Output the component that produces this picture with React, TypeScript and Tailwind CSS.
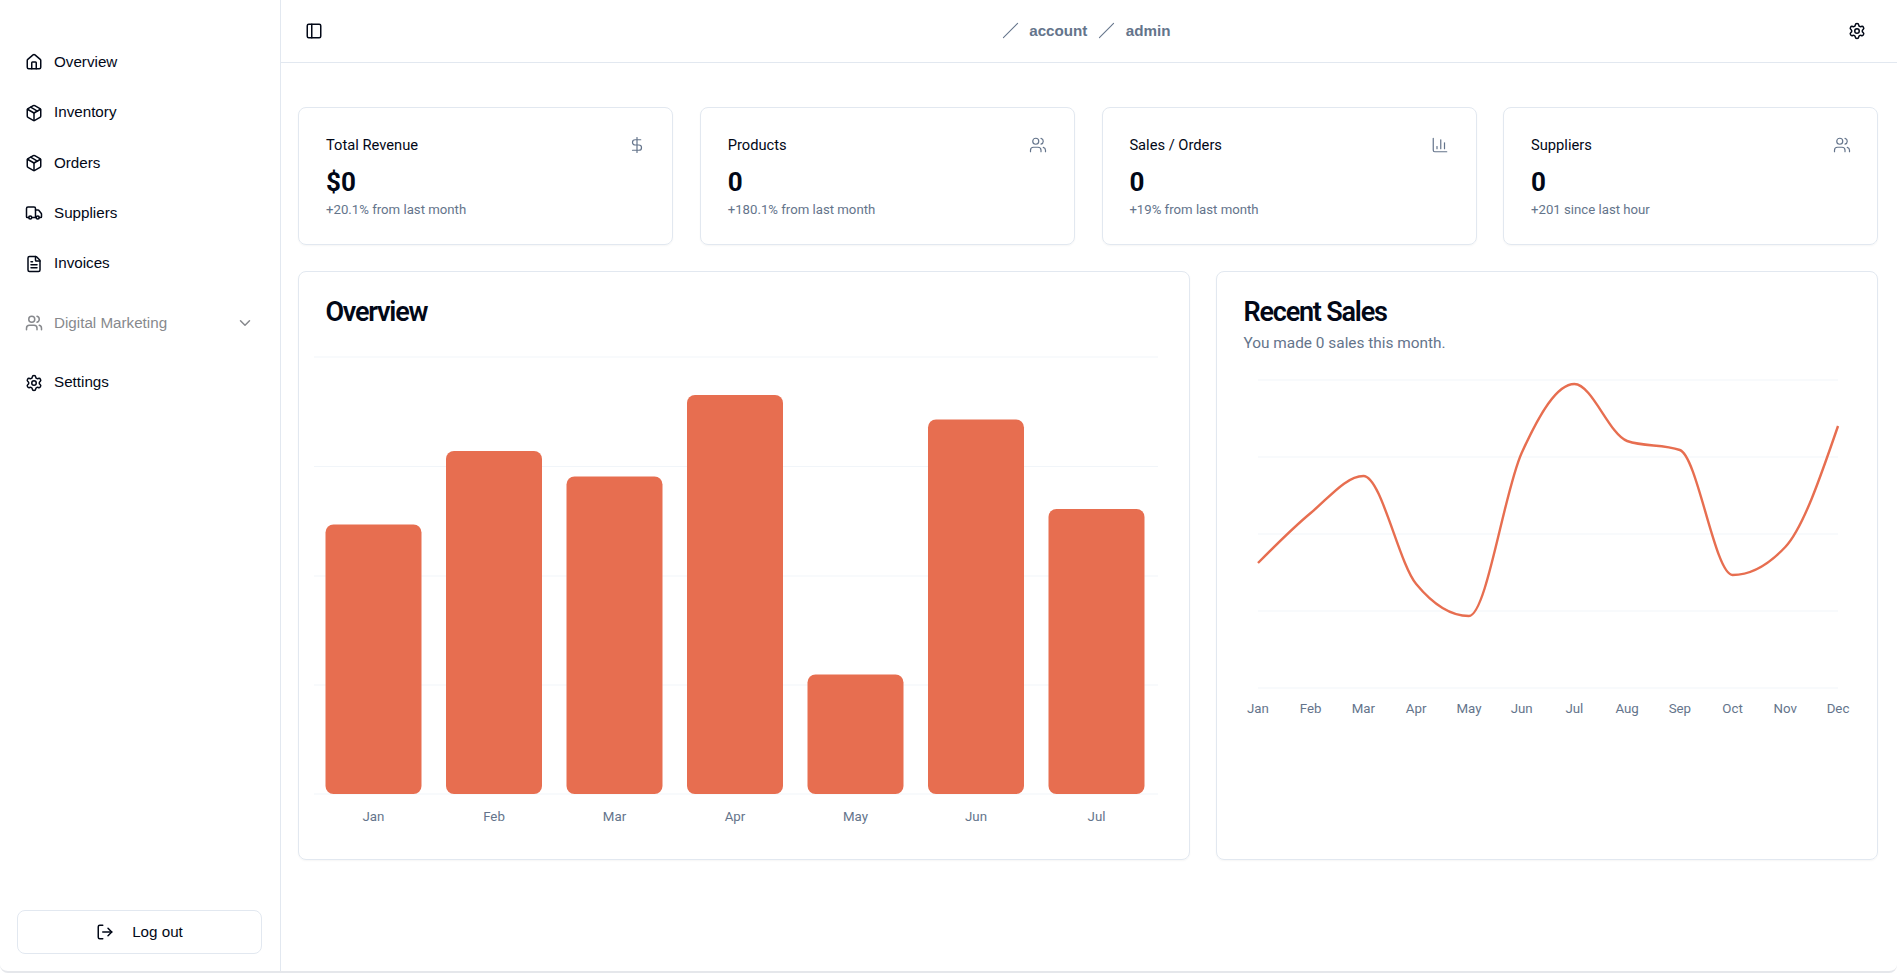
/**
 * Admin dashboard - sidebar, stat cards, bar chart and sales line chart
 */
import {
  ChartColumn,
  ChevronDown,
  DollarSign,
  FileText,
  House,
  LogOut,
  Package,
  PanelLeft,
  Settings,
  Slash,
  Truck,
  Users,
} from 'lucide-react';

const navTop = [
  { label: 'Overview', icon: House },
  { label: 'Inventory', icon: Package },
  { label: 'Orders', icon: Package },
  { label: 'Suppliers', icon: Truck },
  { label: 'Invoices', icon: FileText },
];

const stats = [
  { title: 'Total Revenue', value: '$0', note: '+20.1% from last month', icon: DollarSign },
  { title: 'Products', value: '0', note: '+180.1% from last month', icon: Users },
  { title: 'Sales / Orders', value: '0', note: '+19% from last month', icon: ChartColumn },
  { title: 'Suppliers', value: '0', note: '+201 since last hour', icon: Users },
];

// Bar tops are page y values, the chart's viewBox uses page coordinates
const bars = [
  { label: 'Jan', top: 524.5 },
  { label: 'Feb', top: 451 },
  { label: 'Mar', top: 476.5 },
  { label: 'Apr', top: 395 },
  { label: 'May', top: 674.5 },
  { label: 'Jun', top: 419.5 },
  { label: 'Jul', top: 509 },
];

const sales = [
  { label: 'Jan', y: 563 },
  { label: 'Feb', y: 513 },
  { label: 'Mar', y: 476 },
  { label: 'Apr', y: 584 },
  { label: 'May', y: 616 },
  { label: 'Jun', y: 453 },
  { label: 'Jul', y: 384 },
  { label: 'Aug', y: 441 },
  { label: 'Sep', y: 450 },
  { label: 'Oct', y: 575 },
  { label: 'Nov', y: 547 },
  { label: 'Dec', y: 426 },
];

const LINE_LEFT = 1258;
const LINE_STEP = 52.73;

// Same idea as d3's curveMonotoneX, which is what the line follows
const monotonePath = (pts: { x: number; y: number }[]) => {
  const sign = (v: number) => (v < 0 ? -1 : 1);
  const h = pts.slice(1).map((p, i) => p.x - pts[i].x);
  const s = pts.slice(1).map((p, i) => (p.y - pts[i].y) / h[i]);
  const t = pts.map((_, i) => {
    if (i === 0 || i === pts.length - 1) return 0;
    const p = (s[i - 1] * h[i] + s[i] * h[i - 1]) / (h[i - 1] + h[i]);
    return (
      (sign(s[i - 1]) + sign(s[i])) *
        Math.min(Math.abs(s[i - 1]), Math.abs(s[i]), 0.5 * Math.abs(p)) || 0
    );
  });
  t[0] = (3 * s[0] - t[1]) / 2;
  t[pts.length - 1] = (3 * s[s.length - 1] - t[pts.length - 2]) / 2;
  let d = `M${pts[0].x},${pts[0].y}`;
  for (let i = 0; i < pts.length - 1; i++) {
    const dx = h[i] / 3;
    d += `C${pts[i].x + dx},${pts[i].y + dx * t[i]},${pts[i + 1].x - dx},${pts[i + 1].y - dx * t[i + 1]},${pts[i + 1].x},${pts[i + 1].y}`;
  }
  return d;
};

const BarChart = () => (
  <svg viewBox="299 340 890 490" className="block h-[490px] w-[890px]">
    {[357, 466.5, 576, 685, 794].map((y) => (
      <line key={y} x1="314" x2="1158" y1={y} y2={y} stroke="#f1f5f9" />
    ))}
    {bars.map((bar, i) => {
      const x = 325.5 + i * 120.5;
      return (
        <g key={bar.label}>
          <rect x={x} y={bar.top} width="96" height={794 - bar.top} rx="8" fill="#e76e50" />
          <text
            x={x + 48}
            y="821"
            textAnchor="middle"
            fontSize="13.3"
            fill="#64748b"
            className="font-['Roboto',sans-serif]"
          >
            {bar.label}
          </text>
        </g>
      );
    })}
  </svg>
);

const LineChart = () => {
  const pts = sales.map((p, i) => ({ x: LINE_LEFT + i * LINE_STEP, y: p.y }));
  return (
    <svg viewBox="1217 360 660 370" className="block h-[370px] w-[660px]">
      {[380, 457, 534, 611, 688].map((y) => (
        <line key={y} x1="1258" x2="1838" y1={y} y2={y} stroke="#f1f5f9" />
      ))}
      <path d={monotonePath(pts)} fill="none" stroke="#e76e50" strokeWidth="2.4" />
      {sales.map((p, i) => (
        <text
          key={p.label}
          x={pts[i].x}
          y="713"
          textAnchor="middle"
          fontSize="13.3"
          fill="#64748b"
          className="font-['Roboto',sans-serif]"
        >
          {p.label}
        </text>
      ))}
    </svg>
  );
};

const App = () => {
  return (
    <div className="flex h-[973px] overflow-hidden rounded-lg border-b-2 border-gray-200 bg-white font-['Liberation_Sans',sans-serif] text-[#020817]">
      {/* Sidebar */}
      <aside className="flex w-[281px] shrink-0 flex-col border-r border-[#e2e8f0] px-[17px] pb-[17px] pt-[37px]">
        <nav className="flex flex-col">
          {navTop.map(({ label, icon: Icon }) => (
            <div key={label} className="flex h-[50.4px] items-center gap-[11.5px] px-[7.5px] text-[15.2px]">
              <Icon size={18} className="shrink-0" />
              <span>{label}</span>
            </div>
          ))}
          <div className="mt-[9px] flex h-[50.4px] items-center gap-[11.5px] px-[7.5px] text-[15.2px] text-[#87898d]">
            <Users size={18} className="shrink-0" />
            <span>Digital Marketing</span>
            <ChevronDown size={18} className="ml-auto mr-[1.5px]" />
          </div>
          <div className="mt-[9px] flex h-[50.4px] items-center gap-[11.5px] px-[7.5px] text-[15.2px]">
            <Settings size={18} className="shrink-0" />
            <span>Settings</span>
          </div>
        </nav>
        <button className="mt-auto flex h-[44px] w-[245px] items-center justify-center gap-[18px] rounded-lg border border-[#e2e8f0] text-[15.2px]">
          <LogOut size={18} />
          <span>Log out</span>
        </button>
      </aside>

      <div className="flex min-w-0 flex-1 flex-col">
        {/* Top bar */}
        <header className="flex h-[63px] shrink-0 items-center justify-between border-b border-[#e2e8f0] pl-[24px] pr-[31px]">
          <PanelLeft size={18} />
          <div className="ml-[1px] flex items-center text-[15.2px] font-bold text-[#64748b]">
            <Slash size={17} strokeWidth={1.5} />
            <span className="ml-[10.7px]">account</span>
            <Slash size={17} strokeWidth={1.5} className="ml-[10.5px]" />
            <span className="ml-[10.8px]">admin</span>
          </div>
          <Settings size={18} />
        </header>

        {/* Content */}
        <main className="pl-[17.4px] pr-[18.6px] pt-[44px] font-['Roboto',sans-serif]">
          <div className="grid grid-cols-4 gap-[26.67px]">
            {stats.map(({ title, value, note, icon: Icon }) => (
              <div
                key={title}
                className="h-[138px] rounded-lg border border-[#e2e8f0] px-[26.67px] pt-[27px] shadow-[0_1px_2px_rgba(0,0,0,0.04)]"
              >
                <div className="flex h-[20px] items-center justify-between">
                  <span className="text-[14.7px]">{title}</span>
                  <Icon size={18} strokeWidth={1.6} className="text-[#64748b]" />
                </div>
                <div className="mt-[11px] text-[26px] font-bold leading-[32px]">{value}</div>
                <div className="mt-[2px] text-[13.2px] text-[#64748b]">{note}</div>
              </div>
            ))}
          </div>

          <div className="mt-[26px] grid grid-cols-7 gap-[26.67px]">
            <div className="col-span-4 h-[589px] rounded-lg border border-[#e2e8f0] shadow-[0_1px_2px_rgba(0,0,0,0.04)]">
              <h3 className="h-[68px] pl-[26px] pt-[24px] text-[27px] font-semibold leading-[32px] tracking-[-1.2px]">
                Overview
              </h3>
              <BarChart />
            </div>
            <div className="col-span-3 h-[589px] rounded-lg border border-[#e2e8f0] shadow-[0_1px_2px_rgba(0,0,0,0.04)]">
              <h3 className="pl-[26px] pt-[24px] text-[27px] font-semibold leading-[32px] tracking-[-1.2px]">
                Recent Sales
              </h3>
              <p className="h-[32px] pl-[26px] pt-[4px] text-[15.4px] text-[#64748b]">You made 0 sales this month.</p>
              <LineChart />
            </div>
          </div>
        </main>
      </div>
    </div>
  );
};

export default App;
